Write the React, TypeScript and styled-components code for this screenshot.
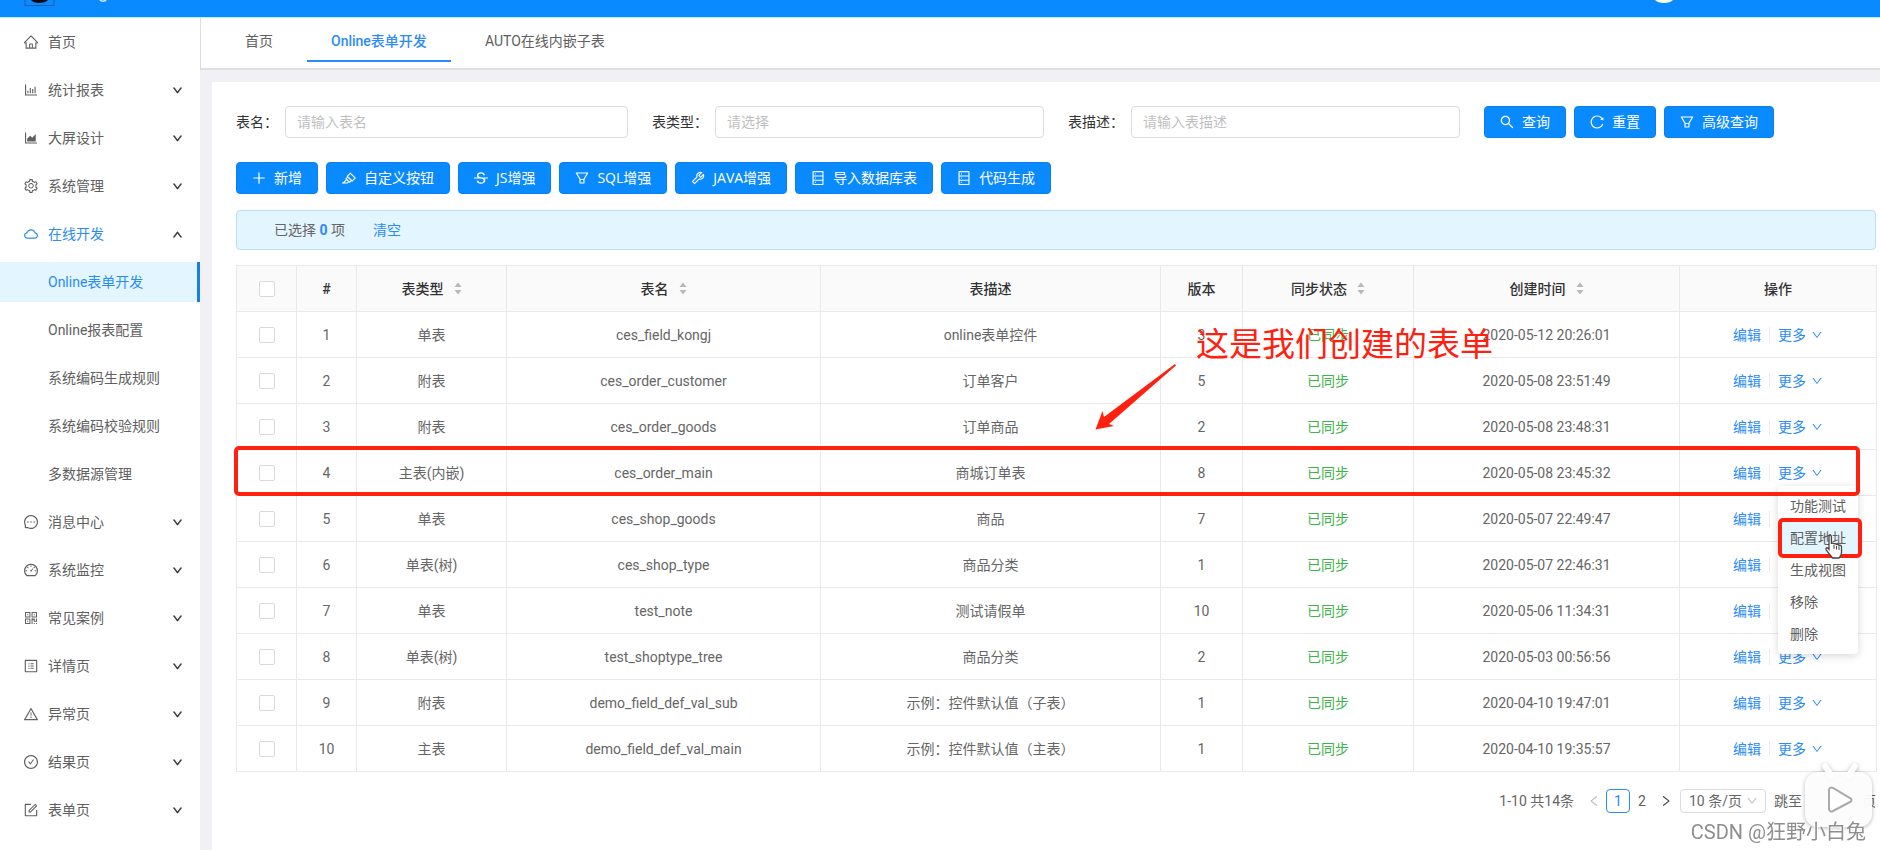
import React from 'react';
import styled, { createGlobalStyle, css } from 'styled-components';
import {
  AiOutlineHome, AiOutlineBarChart, AiOutlineAreaChart, AiOutlineSetting, AiOutlineCloud, AiOutlineMessage,
  AiOutlineDashboard, AiOutlineQrcode, AiOutlineProfile, AiOutlineWarning, AiOutlineCheckCircle, AiOutlineForm,
  AiOutlinePlus, AiOutlineHighlight, AiOutlineStrikethrough, AiOutlineFilter, AiOutlineTool, AiOutlineDatabase,
  AiOutlineSearch, AiOutlineReload, AiOutlineDown, AiOutlineLeft, AiOutlineRight,
} from 'react-icons/ai';
import type { IconType } from 'react-icons';

const BLUE = '#0a8aff';
const LINK = '#2b8cf5';
const RED = '#ff2010';

const GlobalStyle = createGlobalStyle`
  * { box-sizing: border-box; }
  body {
    margin: 0;
    font-family: Roboto, "Noto Sans CJK SC", sans-serif;
    font-size: 14px;
    line-height: 20px;
    color: #666;
    background: #f0f0f5;
    overflow: hidden;
  }
  button, input, select { font: inherit; color: inherit; margin: 0; }
  a { color: ${LINK}; text-decoration: none; }
`;

const Page = styled.div`
  display: flex;
  flex-direction: column;
  height: 100vh;
  min-width: 1500px;
`;

const TopBar = styled.header`
  flex: none;
  display: flex;
  justify-content: space-between;
  height: 18px;
  padding: 0 206px 0 24px;
  background: ${BLUE};
  border-bottom: 1px solid #b5ecff;
  svg { display: block; }
`;

const Body = styled.div`
  flex: 1;
  display: flex;
  min-height: 0;
`;

const Sidebar = styled.nav`
  flex: none;
  width: 200px;
  background: #fff;
  overflow: hidden;
`;

const MenuList = styled.ul`
  display: flex;
  flex-direction: column;
  list-style: none;
  margin: 0;
  padding: 0;
`;

const MenuItem = styled.li`
  display: flex;
  flex-direction: column;
`;

const MenuLink = styled.a<{ $active?: boolean; $sub?: boolean; $selected?: boolean }>`
  display: flex;
  align-items: center;
  gap: 9px;
  height: 40px;
  margin: 4px 0;
  padding: 0 17px 0 ${p => (p.$sub ? 48 : 23)}px;
  color: ${p => (p.$active || p.$selected ? LINK : '#606060')};
  ${p => p.$selected && css`
    background: #e3f5ff;
    border-right: 3px solid #1580e0;
  `}
  > svg:first-child { font-size: 16px; }
`;

const Caret = styled(AiOutlineDown)<{ $up?: boolean }>`
  margin-left: auto;
  width: 11px;
  height: 11px;
  color: #333;
  stroke: #333;
  stroke-width: 60;
  ${p => p.$up && css`transform: rotate(180deg);`}
`;

const Main = styled.main`
  flex: 1;
  min-width: 0;
  display: flex;
  flex-direction: column;
`;

const Tabs = styled.div`
  flex: none;
  display: flex;
  gap: 10px;
  height: 52px;
  padding: 0 20px;
  background: #fff;
  border-left: 1px solid #dcdcde;
  border-bottom: 2px solid #dddfe0;
`;

const Tab = styled.button<{ $active?: boolean }>`
  height: 44px;
  padding: 3px 24px 0;
  border: 0;
  background: none;
  color: ${p => (p.$active ? LINK : '#606060')};
  font-weight: ${p => (p.$active ? 500 : 400)};
  border-bottom: 2px solid ${p => (p.$active ? LINK : 'transparent')};
`;

const Card = styled.section`
  flex: 1;
  margin: 12px 0 0 12px;
  padding: 24px 4px 0 24px;
  background: #fff;
`;

const SearchForm = styled.form`
  display: grid;
  grid-template-columns: repeat(4, 1fr);
  gap: 24px;
  margin-bottom: 24px;
`;

const Field = styled.div`
  display: flex;
  align-items: center;
  label { flex: none; color: #333; padding-right: 7px; }
`;

const control = css`
  border: 1px solid #dcdcdc;
  border-radius: 4px;
  background: #fff;
  outline: none;
`;

const TextInput = styled.input`
  ${control}
  flex: 1;
  min-width: 0;
  height: 32px;
  padding: 0 11px;
  &::placeholder { color: #bfbfbf; }
`;

const TypeSelect = styled.select`
  ${control}
  appearance: none;
  flex: 1;
  min-width: 0;
  height: 32px;
  padding: 0 11px;
  color: #bfbfbf;
`;

const ButtonRow = styled.div`
  display: flex;
  gap: 8px;
`;

const Toolbar = styled(ButtonRow)`
  margin-bottom: 16px;
`;

const PrimaryButton = styled.button`
  display: flex;
  align-items: center;
  gap: 7px;
  flex: none;
  height: 32px;
  padding: 0 15px 0 14px;
  border: 1px solid #0a80f0;
  border-radius: 4px;
  background: ${BLUE};
  color: #fff;
  font-family: "Open Sans", "Noto Sans CJK SC", sans-serif;
  white-space: nowrap;
  svg { width: 16px; height: 16px; }
`;

const SelectionBar = styled.div`
  display: flex;
  align-items: center;
  gap: 28px;
  height: 40px;
  margin-bottom: 15px;
  padding: 0 37px;
  border: 1px solid #b9dff7;
  border-radius: 4px;
  background: #e3f5fe;
  b { color: ${LINK}; }
`;

const TableArea = styled.div`
  position: relative;
`;

const Table = styled.table`
  width: 100%;
  table-layout: fixed;
  border-collapse: collapse;
  th, td {
    height: 46px;
    padding: 0;
    border: 1px solid #e9e9eb;
    text-align: center;
    font-weight: 400;
    white-space: nowrap;
  }
  th { background: #fafafa; color: #333; font-weight: 500; }
`;

const Check = styled.input`
  appearance: none;
  && { display: block; margin: 0 auto; }
  width: 16px;
  height: 16px;
  border: 1px solid #d9d9d9;
  border-radius: 2px;
  background: #fff;
`;

const SortIcon = styled.svg`
  margin-left: 10px;
  vertical-align: -1px;
`;

const Synced = styled.span`
  color: #3db54a;
`;

const Actions = styled.div`
  position: relative;
  display: inline-flex;
  align-items: center;
`;

const EditLink = styled.a`
  padding-right: 8px;
  margin-right: 8px;
  border-right: 1px solid #ececec;
  line-height: 16px;
`;

const MoreLink = styled.a`
  display: flex;
  align-items: center;
  gap: 5px;
  svg { width: 12px; height: 12px; }
`;

const DropMenu = styled.ul`
  position: absolute;
  z-index: 2;
  top: 23px;
  right: -35px;
  list-style: none;
  margin: 0;
  padding: 4px 0;
  border-radius: 4px;
  background: #fff;
  box-shadow: 0 2px 8px rgba(0, 0, 0, 0.16);
  text-align: left;
`;

const DropItem = styled.li<{ $hover?: boolean }>`
  padding: 6px 12px;
  background: ${p => (p.$hover ? '#e3f5fe' : 'transparent')};
  a { color: #606060; }
`;

const RowMark = styled.div`
  position: absolute;
  z-index: 3;
  top: 181px;
  left: -2px;
  right: 16px;
  height: 50px;
  border: 4px solid ${RED};
  border-radius: 5px;
`;

const ItemMark = styled.div`
  position: absolute;
  z-index: 3;
  top: 32px;
  left: 0;
  right: -4px;
  height: 40px;
  border: 4px solid ${RED};
  border-radius: 5px;
`;

const Cursor = styled.svg`
  position: absolute;
  z-index: 4;
  top: 48px;
  left: 46px;
`;

const NoteText = styled.div`
  position: absolute;
  z-index: 3;
  top: 60px;
  left: 960px;
  font-size: 33px;
  line-height: 40px;
  color: ${RED};
  white-space: nowrap;
`;

const NoteArrow = styled.svg`
  position: absolute;
  z-index: 3;
  top: 98px;
  left: 859px;
`;

const Pagination = styled.div`
  display: flex;
  align-items: center;
  justify-content: flex-end;
  margin-top: 16px;
  height: 26px;
`;

const Total = styled.span`
  margin-right: 8px;
`;

const PageArrow = styled.button<{ $dim?: boolean }>`
  display: flex;
  align-items: center;
  justify-content: center;
  width: 24px;
  height: 24px;
  padding: 0;
  border: 0;
  background: none;
  color: ${p => (p.$dim ? '#bbb' : '#444')};
  svg { width: 14px; height: 14px; }
`;

const PageNumber = styled.button<{ $current?: boolean }>`
  width: 24px;
  height: 24px;
  padding: 0;
  line-height: 20px;
  border: 1px solid ${p => (p.$current ? LINK : 'transparent')};
  border-radius: 4px;
  background: none;
  color: ${p => (p.$current ? LINK : '#606060')};
`;

const SizeBox = styled.div`
  position: relative;
  margin: 0 8px 0 2px;
  select {
    ${control}
    appearance: none;
    display: block;
    width: 86px;
    height: 24px;
    padding: 0 8px;
    line-height: 20px;
  }
  svg {
    position: absolute;
    right: 8px;
    top: 6px;
    width: 12px;
    height: 12px;
    color: #bbb;
  }
`;

const JumpInput = styled.input`
  ${control}
  width: 44px;
  height: 24px;
  margin: 0 8px;
`;

const PlayBadge = styled.svg`
  position: fixed;
  z-index: 5;
  right: 0;
  bottom: 14px;
  g { filter: drop-shadow(0 1px 2px rgba(0, 0, 0, 0.3)); }
`;

const Watermark = styled.div`
  position: fixed;
  z-index: 6;
  right: 14px;
  bottom: 4px;
  font-size: 20px;
  line-height: 28px;
  color: #8e8e8e;
  text-shadow: 1px 1px 0 #fff, -1px -1px 0 #fff;
`;

type MenuEntry = { label: string; icon?: IconType; open?: boolean; children?: string[]; leaf?: boolean };

const menu: MenuEntry[] = [
  { label: '首页', icon: AiOutlineHome, leaf: true },
  { label: '统计报表', icon: AiOutlineBarChart },
  { label: '大屏设计', icon: AiOutlineAreaChart },
  { label: '系统管理', icon: AiOutlineSetting },
  {
    label: '在线开发', icon: AiOutlineCloud, open: true,
    children: ['Online表单开发', 'Online报表配置', '系统编码生成规则', '系统编码校验规则', '多数据源管理'],
  },
  { label: '消息中心', icon: AiOutlineMessage },
  { label: '系统监控', icon: AiOutlineDashboard },
  { label: '常见案例', icon: AiOutlineQrcode },
  { label: '详情页', icon: AiOutlineProfile },
  { label: '异常页', icon: AiOutlineWarning },
  { label: '结果页', icon: AiOutlineCheckCircle },
  { label: '表单页', icon: AiOutlineForm },
];

const tools: [string, IconType][] = [
  ['新增', AiOutlinePlus],
  ['自定义按钮', AiOutlineHighlight],
  ['JS增强', AiOutlineStrikethrough],
  ['SQL增强', AiOutlineFilter],
  ['JAVA增强', AiOutlineTool],
  ['导入数据库表', AiOutlineDatabase],
  ['代码生成', AiOutlineDatabase],
];

const columns: { title: string; width: number; sort?: boolean }[] = [
  { title: '#', width: 60 },
  { title: '表类型', width: 150, sort: true },
  { title: '表名', width: 314, sort: true },
  { title: '表描述', width: 340 },
  { title: '版本', width: 82 },
  { title: '同步状态', width: 171, sort: true },
  { title: '创建时间', width: 266, sort: true },
  { title: '操作', width: 197 },
];

const rows = [
  ['单表', 'ces_field_kongj', 'online表单控件', '3', '2020-05-12 20:26:01'],
  ['附表', 'ces_order_customer', '订单客户', '5', '2020-05-08 23:51:49'],
  ['附表', 'ces_order_goods', '订单商品', '2', '2020-05-08 23:48:31'],
  ['主表(内嵌)', 'ces_order_main', '商城订单表', '8', '2020-05-08 23:45:32'],
  ['单表', 'ces_shop_goods', '商品', '7', '2020-05-07 22:49:47'],
  ['单表(树)', 'ces_shop_type', '商品分类', '1', '2020-05-07 22:46:31'],
  ['单表', 'test_note', '测试请假单', '10', '2020-05-06 11:34:31'],
  ['单表(树)', 'test_shoptype_tree', '商品分类', '2', '2020-05-03 00:56:56'],
  ['附表', 'demo_field_def_val_sub', '示例：控件默认值（子表）', '1', '2020-04-10 19:47:01'],
  ['主表', 'demo_field_def_val_main', '示例：控件默认值（主表）', '1', '2020-04-10 19:35:57'],
];

const dropItems = ['功能测试', '配置地址', '生成视图', '移除', '删除'];
const OPEN_ROW = 3;

function SideMenu() {
  return (
    <Sidebar>
      <MenuList>
        {menu.map(({ label, icon: Icon, open, children, leaf }) => (
          <MenuItem key={label}>
            <MenuLink href="#" $active={open}>
              {Icon && <Icon />}
              {label}
              {!leaf && <Caret $up={open} />}
            </MenuLink>
            {children && (
              <MenuList>
                {children.map((c, i) => (
                  <MenuItem key={c}><MenuLink href="#" $sub $selected={i === 0}>{c}</MenuLink></MenuItem>
                ))}
              </MenuList>
            )}
          </MenuItem>
        ))}
      </MenuList>
    </Sidebar>
  );
}

function Sorter() {
  return (
    <SortIcon width="8" height="13" viewBox="0 0 8 13" fill="#b8b8b8" aria-hidden="true">
      <path d="M4 0.5 7.5 5h-7zM4 12.5 0.5 8h7z" />
    </SortIcon>
  );
}

function MoreMenu() {
  return (
    <DropMenu>
      {dropItems.map((item, i) => (
        <DropItem key={item} $hover={i === 1}><a href="#">{item}</a></DropItem>
      ))}
      <ItemMark as="li" />
      <Cursor width="20" height="26" viewBox="0 0 20 26" aria-hidden="true">
        <path
          d="M5 2.5c0-1.6 2.4-1.6 2.4 0V10c.2-1.3 2.5-1.2 2.6.3.3-1 2.4-.8 2.5.6.4-.9 2.5-.7 2.6.8.5-.8 2.4-.4 2.4 1.2v5.6c0 2.5-1.5 4.5-2.5 5.5H8.500C7 22 4.500 19 2.200 15.800c-1-1.600.7-2.600 1.800-1.500L5 15.400z"
          fill="#fff" stroke="#444" strokeWidth="1.3"
        />
        <path d="M10 11v4M12.500 12v3.500M15 13v3" stroke="#444" fill="none" />
      </Cursor>
    </DropMenu>
  );
}

function DataTable() {
  return (
    <TableArea>
      <Table>
        <colgroup>
          <col style={{ width: 60 }} />
          {columns.map(c => <col key={c.title} style={{ width: c.width }} />)}
        </colgroup>
        <thead>
          <tr>
            <th><Check type="checkbox" aria-label="全选" /></th>
            {columns.map(c => <th key={c.title}>{c.title}{c.sort && <Sorter />}</th>)}
          </tr>
        </thead>
        <tbody>
          {rows.map(([type, name, desc, version, time], i) => (
            <tr key={name}>
              <td><Check type="checkbox" aria-label={name} /></td>
              <td>{i + 1}</td>
              <td>{type}</td>
              <td>{name}</td>
              <td>{desc}</td>
              <td>{version}</td>
              <td><Synced>已同步</Synced></td>
              <td>{time}</td>
              <td>
                <Actions>
                  <EditLink href="#">编辑</EditLink>
                  <MoreLink href="#">更多<AiOutlineDown /></MoreLink>
                  {i === OPEN_ROW && <MoreMenu />}
                </Actions>
              </td>
            </tr>
          ))}
        </tbody>
      </Table>
      <RowMark />
      <NoteText>这是我们创建的表单</NoteText>
      <NoteArrow width="82" height="68" viewBox="0 0 82 68" fill={RED} aria-hidden="true">
        <path d="M0.500 66.500 7.500 48l1.500 6L80 1l1 1.500L14 61l5 2z" />
      </NoteArrow>
    </TableArea>
  );
}

export default function App() {
  return (
    <Page>
      <GlobalStyle />
      <TopBar>
        <svg width="90" height="7" viewBox="0 0 90 7" aria-hidden="true">
          <path d="M1 0v5.500h29V0" fill="none" stroke="#1c5fae" />
          <path d="M7 0c2 4 14 4 17 0z" fill="#0b0b14" />
          <path d="M76 0c1 1.500 5 1.500 6 0" fill="none" stroke="#cfe8ff" strokeWidth="1.500" />
        </svg>
        <svg width="20" height="4" viewBox="0 0 20 4" aria-hidden="true">
          <path d="M1 0c3 4 15 4 18 0z" fill="#fff" />
        </svg>
      </TopBar>
      <Body>
        <SideMenu />
        <Main>
          <Tabs>
            <Tab>首页</Tab>
            <Tab $active>Online表单开发</Tab>
            <Tab>AUTO在线内嵌子表</Tab>
          </Tabs>
          <Card>
            <SearchForm>
              <Field>
                <label htmlFor="name">表名：</label>
                <TextInput id="name" placeholder="请输入表名" />
              </Field>
              <Field>
                <label htmlFor="type">表类型：</label>
                <TypeSelect id="type"><option>请选择</option></TypeSelect>
              </Field>
              <Field>
                <label htmlFor="desc">表描述：</label>
                <TextInput id="desc" placeholder="请输入表描述" />
              </Field>
              <ButtonRow>
                <PrimaryButton type="button"><AiOutlineSearch />查询</PrimaryButton>
                <PrimaryButton type="button"><AiOutlineReload />重置</PrimaryButton>
                <PrimaryButton type="button"><AiOutlineFilter />高级查询</PrimaryButton>
              </ButtonRow>
            </SearchForm>
            <Toolbar>
              {tools.map(([label, Icon]) => (
                <PrimaryButton key={label} type="button"><Icon />{label}</PrimaryButton>
              ))}
            </Toolbar>
            <SelectionBar>
              <span>已选择 <b>0</b> 项</span>
              <a href="#">清空</a>
            </SelectionBar>
            <DataTable />
            <Pagination>
              <Total>1-10 共14条</Total>
              <PageArrow $dim aria-label="上一页"><AiOutlineLeft /></PageArrow>
              <PageNumber $current>1</PageNumber>
              <PageNumber>2</PageNumber>
              <PageArrow aria-label="下一页"><AiOutlineRight /></PageArrow>
              <SizeBox>
                <select aria-label="每页条数"><option>10 条/页</option></select>
                <AiOutlineDown />
              </SizeBox>
              <label htmlFor="jump">跳至</label>
              <JumpInput id="jump" />
              页
            </Pagination>
          </Card>
        </Main>
      </Body>
      <PlayBadge width="80" height="74" viewBox="0 0 80 74" aria-hidden="true">
        <g>
          <path d="M25 4l6 9M55 4l-6 9" stroke="#fff" strokeWidth="6" strokeLinecap="round" />
          <rect x="5" y="10" width="67" height="55" rx="13" fill="#fff" fillOpacity="0.95" />
        </g>
        <path d="M29 28c0-2 2-3 4-2l17 10c2 1 2 3 0 4L33 49c-2 1-4 0-4-2z" fill="#fff" stroke="#aaa" strokeWidth="2" />
      </PlayBadge>
      <Watermark>CSDN @狂野小白兔</Watermark>
    </Page>
  );
}
